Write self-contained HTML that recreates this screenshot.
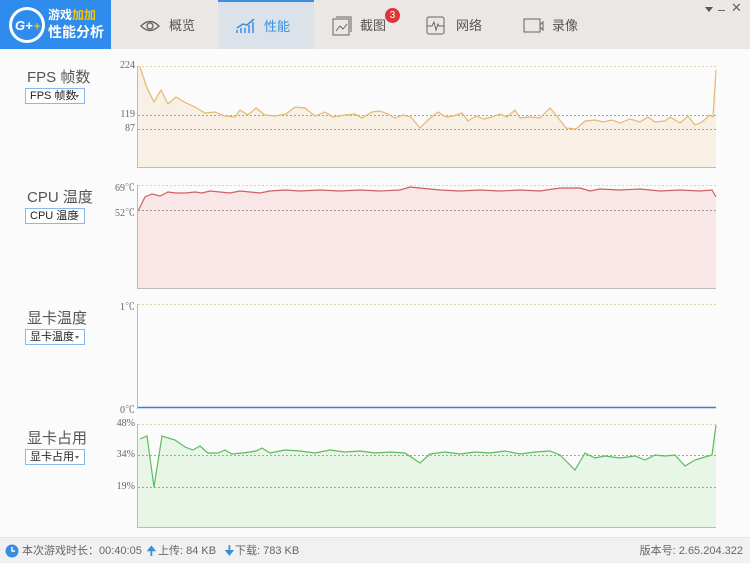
<!DOCTYPE html>
<html><head><meta charset="utf-8"><style>
*{margin:0;padding:0;box-sizing:border-box}
body{width:750px;height:563px;overflow:hidden;background:#fbfbfb;font-family:"Liberation Sans","Noto Sans CJK SC",sans-serif;position:relative}
.hdr{position:absolute;left:0;top:0;width:750px;height:49px;background:#ebe7e4}
.logo{position:absolute;left:0;top:0;width:111px;height:49px;background:#2f8cec;color:#fff}
.tab{position:absolute;top:0;height:49px;font-size:13px;color:#555;line-height:52px}
.act{background:#dbe2ea;color:#3a8ee0;border-top:2px solid #3a8ee0}
.lbl{position:absolute;left:27px;font-size:15px;color:#555}
.sel{position:absolute;left:25px;width:60px;height:16px;border:1px solid #8ab8e8;background:#fff;font-size:11px;line-height:14px;padding-left:4px;color:#222}
.sel:after{content:"";position:absolute;right:5px;top:6px;border:2px solid transparent;border-top:3px solid #666}
.ax{position:absolute;font-size:10px;color:#666;font-family:"Liberation Serif","Noto Serif CJK SC",serif;text-align:right;width:40px}
.ftr{position:absolute;left:0;top:537px;width:750px;height:26px;background:#f1f1f1;border-top:1px solid #e4e4e4;font-size:11px;color:#666;line-height:26px}
</style></head><body>
<div class="hdr"></div>
<div class="logo">
 <svg width="40" height="40" style="position:absolute;left:7px;top:5px"><circle cx="20" cy="20" r="18" fill="#fff"/><circle cx="20" cy="20" r="15" fill="#2f8cec"/><text x="8" y="25" font-size="13" font-weight="bold" font-style="italic" fill="#fff" font-family="Liberation Sans">G+</text><text x="27" y="25" font-size="11" font-weight="bold" fill="#f5c400">+</text></svg>
 <div style="position:absolute;left:48px;top:6px;font-size:12px;font-weight:bold">游戏<span style="color:#f5c400">加加</span></div>
 <div style="position:absolute;left:48px;top:22px;font-size:14px;font-weight:bold">性能分析</div>
</div>
<div class="tab" style="left:140px;"><svg width="20" height="14" style="position:absolute;left:0;top:19px"><path d="M1 7Q10-2 19 7Q10 16 1 7Z" fill="none" stroke="#666" stroke-width="1.3"/><circle cx="10" cy="7" r="3" fill="none" stroke="#666" stroke-width="1.3"/></svg><span style="margin-left:29px">概览</span></div>
<div class="tab act" style="left:218px;width:96px;line-height:50px"><svg width="22" height="18" style="position:absolute;left:17px;top:15px"><path d="M2 16v-3M6 16v-5M10 16v-5M14 16v-8M18 16v-11M2 11L8 7 12 8 19 2" stroke="#3a8ee0" stroke-width="1.5" fill="none"/></svg><span style="margin-left:46px">性能</span></div>
<div class="tab" style="left:332px;"><svg width="20" height="20" style="position:absolute;left:0;top:16px"><rect x="1" y="3" width="16" height="16" fill="none" stroke="#666"/><path d="M4 1h15v15" fill="none" stroke="#666"/><path d="M4 15l4-5 3 3 4-5" fill="none" stroke="#666"/></svg><span style="margin-left:28px">截图</span></div>
<div style="position:absolute;left:385px;top:8px;width:15px;height:15px;border-radius:50%;background:#e0333a;color:#fff;font-size:10px;text-align:center;line-height:15px">3</div>
<div class="tab" style="left:426px;"><svg width="20" height="20" style="position:absolute;left:0;top:16px"><rect x="1" y="1" width="17" height="17" rx="2" fill="none" stroke="#666"/><path d="M1 10h5l2-4 2 8 2-6 1 2h5" fill="none" stroke="#666"/></svg><span style="margin-left:30px">网络</span></div>
<div class="tab" style="left:523px;"><svg width="22" height="16" style="position:absolute;left:0;top:18px"><rect x="1" y="1" width="16" height="13" fill="none" stroke="#666"/><path d="M17 7l3-3v8l-3-3" fill="none" stroke="#666"/></svg><span style="margin-left:29px">录像</span></div>
<div style="position:absolute;left:705px;top:7px;border:4px solid transparent;border-top:5px solid #555"></div>
<div style="position:absolute;left:718px;top:10px;width:7px;height:1px;background:#666"></div>
<div style="position:absolute;left:731px;top:0px;font-size:13px;color:#666">✕</div>

<div class="lbl" style="top:66px">FPS 帧数</div><div class="sel" style="top:88px">FPS 帧数</div>
<div class="lbl" style="top:186px">CPU 温度</div><div class="sel" style="top:208px">CPU 温度</div>
<div class="lbl" style="top:307px">显卡温度</div><div class="sel" style="top:329px">显卡温度</div>
<div class="lbl" style="top:427px">显卡占用</div><div class="sel" style="top:449px">显卡占用</div>

<div class="ax" style="left:95px;top:60px">224</div>
<div class="ax" style="left:95px;top:109px">119</div>
<div class="ax" style="left:95px;top:123px">87</div>
<div class="ax" style="left:95px;top:179px">69℃</div>
<div class="ax" style="left:95px;top:204px">52℃</div>
<div class="ax" style="left:95px;top:298px">1℃</div>
<div class="ax" style="left:95px;top:401px">0℃</div>
<div class="ax" style="left:95px;top:418px">48%</div>
<div class="ax" style="left:95px;top:449px">34%</div>
<div class="ax" style="left:95px;top:481px">19%</div>

<svg width="750" height="563" style="position:absolute;left:0;top:0">
<path d="M140 67L147 88 154 102 161 90 168 104 176 97 184 102 195 107 205 113 215 112 225 116 235 117 240 110 248 115 256 108 265 115 275 116 286 114 295 107 305 108 315 116 325 112 333 117 345 115 355 114 362 118 372 112 380 111 388 114 395 118 403 115 411 117 420 128 428 120 438 112 446 117 453 116 462 113 468 121 476 116 484 119 492 117 500 114 507 117 515 110 520 118 530 117 540 118 550 108 556 115 566 128 576 129 585 121 595 120 603 122 612 120 620 123 630 119 640 122 648 117 655 122 665 121 670 117 680 123 688 116 695 125 702 122 710 115 713 117 716 70V167H138V67Z" fill="#f8f0e4" stroke="none"/>
<path d="M138 211L145 197 152 194 160 196 168 192 176 193 186 193 195 192 202 193 210 191 220 192 230 193 240 191 250 192 260 193 270 191 285 190 300 191 320 190 340 191 360 190 380 191 400 190 410 187 420 188 440 190 460 191 480 190 500 191 520 190 540 191 560 188 580 188 590 191 600 189 620 190 640 189 660 191 680 190 700 191 712 190 716 197V288H138Z" fill="#f9e6e6"/>
<path d="M140 439L147 436 154 487 162 436 175 440 185 447 193 450 200 446 208 453 218 453 225 450 232 454 242 453 250 452 256 451 262 448 270 453 285 450 300 451 315 453 330 450 345 452 360 451 375 453 390 452 405 453 420 463 430 454 445 452 460 454 475 452 490 453 505 451 520 454 535 452 550 451 560 455 575 470 585 453 595 458 605 456 620 458 635 456 645 460 655 455 665 456 675 455 685 466 695 460 705 457 712 455 716 425V527H138V439Z" fill="#e8f6e8"/>
<g fill="none" stroke-dasharray="2,2">
<path d="M138 66.5H716" stroke="#e0d3a8"/><path d="M138 115.5H716" stroke="#8aa6dc"/><path d="M138 129.5H716" stroke="#7cbc7c"/>
<path d="M138 185.5H716" stroke="#e0d3a8"/><path d="M138 210.5H716" stroke="#999"/>
<path d="M138 304.5H716" stroke="#e0d3a8"/>
<path d="M138 424.5H716" stroke="#e0d3a8"/><path d="M138 455.5H716" stroke="#8aa6dc"/><path d="M138 487.5H716" stroke="#7cbc7c"/>
</g>
<path d="M140 67L147 88 154 102 161 90 168 104 176 97 184 102 195 107 205 113 215 112 225 116 235 117 240 110 248 115 256 108 265 115 275 116 286 114 295 107 305 108 315 116 325 112 333 117 345 115 355 114 362 118 372 112 380 111 388 114 395 118 403 115 411 117 420 128 428 120 438 112 446 117 453 116 462 113 468 121 476 116 484 119 492 117 500 114 507 117 515 110 520 118 530 117 540 118 550 108 556 115 566 128 576 129 585 121 595 120 603 122 612 120 620 123 630 119 640 122 648 117 655 122 665 121 670 117 680 123 688 116 695 125 702 122 710 115 713 117 716 70" fill="none" stroke="#e6b870" stroke-width="1.2"/>
<path d="M138 211L145 197 152 194 160 196 168 192 176 193 186 193 195 192 202 193 210 191 220 192 230 193 240 191 250 192 260 193 270 191 285 190 300 191 320 190 340 191 360 190 380 191 400 190 410 187 420 188 440 190 460 191 480 190 500 191 520 190 540 191 560 188 580 188 590 191 600 189 620 190 640 189 660 191 680 190 700 191 712 190 716 197" fill="none" stroke="#d06060" stroke-width="1.2"/>
<path d="M138 407.5H716" stroke="#3a80d0" stroke-width="1.5"/>
<path d="M140 439L147 436 154 487 162 436 175 440 185 447 193 450 200 446 208 453 218 453 225 450 232 454 242 453 250 452 256 451 262 448 270 453 285 450 300 451 315 453 330 450 345 452 360 451 375 453 390 452 405 453 420 463 430 454 445 452 460 454 475 452 490 453 505 451 520 454 535 452 550 451 560 455 575 470 585 453 595 458 605 456 620 458 635 456 645 460 655 455 665 456 675 455 685 466 695 460 705 457 712 455 716 425" fill="none" stroke="#5cbc5c" stroke-width="1.2"/>
<g stroke="#bbb"><path d="M137.5 66V168M137 167.5H716M137.5 185V289M137 288.5H716M137.5 304V409M137.5 424V528M137 527.5H716"/></g>
</svg>

<div class="ftr">
 <svg width="14" height="14" style="position:absolute;left:5px;top:6px"><circle cx="7" cy="7" r="6.5" fill="#3a8ee0"/><path d="M7 3v4h3" stroke="#fff" stroke-width="1.4" fill="none"/></svg>
 <span style="position:absolute;left:22px">本次游戏时长：00:40:05</span>
 <span style="position:absolute;left:146px;color:#3a8ee0;font-size:13px">🠉</span><span style="position:absolute;left:158px">上传: 84 KB</span>
 <span style="position:absolute;left:224px;color:#3a8ee0;font-size:13px">🠋</span><span style="position:absolute;left:235px">下载: 783 KB</span>
 <span style="position:absolute;right:7px">版本号: 2.65.204.322</span>
</div>
</body></html>
